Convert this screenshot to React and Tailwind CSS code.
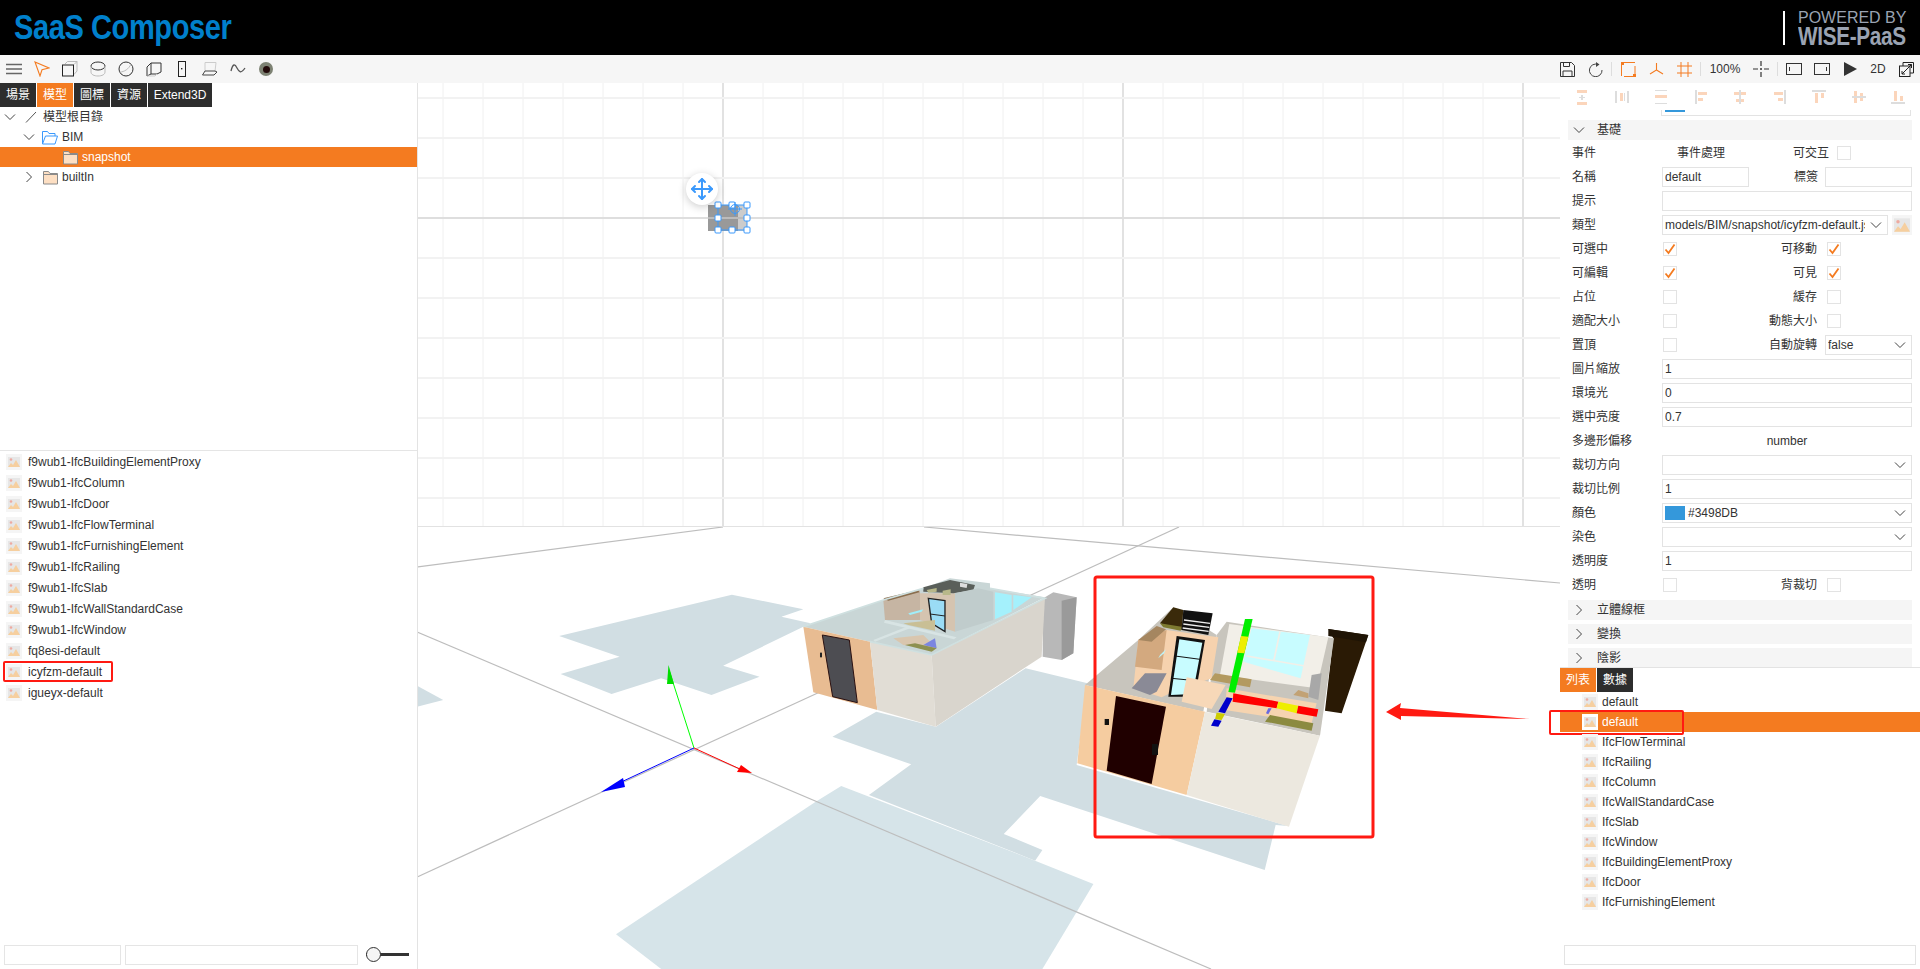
import { Move } from "lucide-react";

const ORANGE = "#f47b20";

function Chevron({ open, className = "" }) {
  return (
    <svg width="12" height="12" viewBox="0 0 12 12" className={className}>
      <polyline
        points={open ? "1,3.5 6,8.5 11,3.5" : "3.5,1 8.5,6 3.5,11"}
        fill="none"
        stroke="#444"
        strokeWidth="1"
      />
    </svg>
  );
}

function Folder({ open }) {
  if (open) {
    return (
      <svg width="16" height="15" viewBox="0 0 16 15">
        <path d="M.5 14V1.500h5l1.500 2h6v2.500" fill="#fff" stroke="#3b99fc" />
        <path d="M.5 14l3-8h12l-2.500 8z" fill="#fff" stroke="#3b99fc" />
      </svg>
    );
  }
  return (
    <svg width="15" height="15" viewBox="0 0 15 15">
      <path d="M.5 14V1.500h5l1.500 2h7.500V14z" fill="#fddfc3" stroke="#8a8a8a" />
      <path d="M.5 4.500h14" stroke="#8a8a8a" />
    </svg>
  );
}

function Pic({ bg = "#f5f5f5", size = 16 }) {
  return (
    <span className="flex shrink-0 items-center justify-center" style={{ background: bg, width: size, height: size }}>
      <svg width={size - 4} height={size - 6} viewBox="0 0 12 10">
        <rect width="12" height="10" fill="#e6e6e6" />
        <circle cx="3" cy="2.500" r="1.300" fill="#eeaaa0" />
        <path d="M0 10l3-4 2 2 3-5 4 7z" fill="#f6cf9f" />
      </svg>
    </span>
  );
}

const tool = "flex h-7 items-center justify-center";

function LeftTools() {
  return (
    <div className="flex items-center">
      <span className={`${tool} w-[28px]`}>
        <svg width="16" height="12" viewBox="0 0 16 12"><path d="M0 1.500h16M0 6h16M0 10.500h16" stroke="#666" strokeWidth="1.400" /></svg>
      </span>
      <span className={`${tool} w-[27px]`}>
        <svg width="16" height="16" viewBox="0 0 16 16"><path d="M1 1l14 6-7 1.800L6 15z" fill="none" stroke={ORANGE} strokeWidth="1.100" /></svg>
      </span>
      <span className={`${tool} w-[29px]`}>
        <svg width="16" height="16" viewBox="0 0 16 16"><path d="M3 3l2.500-2.500H15V10l-3 3.500" fill="none" stroke="#bbb" /><path d="M12 3.500L15 .5" stroke="#bbb" /><rect x=".5" y="4" width="11" height="11" fill="none" stroke="#222" /></svg>
      </span>
      <span className={`${tool} w-[28px]`}>
        <svg width="16" height="16" viewBox="0 0 16 16"><ellipse cx="8" cy="5" rx="7" ry="4" fill="none" stroke="#333" /><path d="M1 5v6c0 2.500 3 4 7 4s7-1.500 7-4V5" fill="none" stroke="#bbb" /></svg>
      </span>
      <span className={`${tool} w-[28px]`}>
        <svg width="16" height="16" viewBox="0 0 16 16"><circle cx="8" cy="8" r="7" fill="none" stroke="#333" /><path d="M2 11c4 0 9-3 11-8" fill="none" stroke="#bbb" /></svg>
      </span>
      <span className={`${tool} w-[28px]`}>
        <svg width="16" height="16" viewBox="0 0 16 16"><path d="M1 6l4-4h10v9l-4 2H5" fill="none" stroke="#333" /><path d="M1 6v9l4-2V2" fill="none" stroke="#333" /><path d="M1 15h8l2-2" fill="none" stroke="#ccc" /></svg>
      </span>
      <span className={`${tool} w-[28px]`}>
        <svg width="10" height="16" viewBox="0 0 10 16"><rect x="1.500" y=".5" width="7" height="15" fill="none" stroke="#222" /><rect x="4" y="7" width="1.400" height="1.400" fill="#222" /></svg>
      </span>
      <span className={`${tool} w-[28px]`}>
        <svg width="16" height="14" viewBox="0 0 16 14"><path d="M3 9V.5h11l-1 9" fill="none" stroke="#ccc" /><path d="M.5 13L3 9h10l2 1-3 3z" fill="none" stroke="#444" /></svg>
      </span>
      <span className={`${tool} w-[28px]`}>
        <svg width="16" height="10" viewBox="0 0 16 10"><path d="M1 7c2-8 4-7 6-3s4 6 8 0" fill="none" stroke="#555" strokeWidth="1.300" /></svg>
      </span>
      <span className={`${tool} w-[28px]`}>
        <span className="flex h-[14px] w-[14px] items-center justify-center rounded-full bg-[#7d8273]">
          <span className="h-[7px] w-[7px] rounded-full bg-[#220a0a]" />
        </span>
      </span>
    </div>
  );
}

function Sep() {
  return <span className="mx-[2px] h-[14px] w-px bg-[#ddd]" />;
}

function RightTools() {
  return (
    <div className="ml-auto flex items-center">
      <span className={`${tool} w-[28px]`}>
        <svg width="15" height="15" viewBox="0 0 15 15"><path d="M.5.5h11l3 3v11H.5z" fill="none" stroke="#333" /><path d="M3.500.5v4h6v-4M3 14.500V9h9v5.500" fill="none" stroke="#333" /></svg>
      </span>
      <span className={`${tool} w-[28px]`}>
        <svg width="15" height="15" viewBox="0 0 15 15"><path d="M10 2.500A6.300 6.300 0 1 0 14 8" fill="none" stroke="#444" /><path d="M8 0l3.500 2.500L8 5z" fill="#444" /></svg>
      </span>
      <Sep />
      <span className={`${tool} w-[28px]`}>
        <svg width="15" height="15" viewBox="0 0 15 15"><path d="M.5 14V.5H14M14 4v10.500H3" fill="none" stroke={ORANGE} /><rect x="0" y="0" width="3" height="3" fill={ORANGE} /><rect x="12" y="12" width="3" height="3" fill={ORANGE} /></svg>
      </span>
      <span className={`${tool} w-[28px]`}>
        <svg width="15" height="15" viewBox="0 0 15 15"><path d="M7.500 1v7L1 12M7.500 8l6.500 4" fill="none" stroke={ORANGE} strokeWidth="1.100" /></svg>
      </span>
      <span className={`${tool} w-[28px]`}>
        <svg width="15" height="15" viewBox="0 0 15 15"><path d="M4 0v15M11 0v15M0 4h15M0 11h15" stroke={ORANGE} /></svg>
      </span>
      <Sep />
      <span className={`${tool} w-[44px] text-xs text-[#333]`}>100%</span>
      <span className={`${tool} w-[28px]`}>
        <svg width="16" height="16" viewBox="0 0 16 16"><path d="M8 0v5M8 11v5M0 8h5M11 8h5" stroke="#333" strokeWidth="1.200" /><circle cx="8" cy="8" r="1" fill="#333" /></svg>
      </span>
      <Sep />
      <span className={`${tool} w-[28px]`}>
        <svg width="16" height="12" viewBox="0 0 16 12"><rect x=".5" y=".5" width="15" height="11" fill="none" stroke="#333" /><path d="M3.500 4v4" stroke="#333" /></svg>
      </span>
      <span className={`${tool} w-[28px]`}>
        <svg width="16" height="12" viewBox="0 0 16 12"><rect x=".5" y=".5" width="15" height="11" fill="none" stroke="#333" /><path d="M12.500 4v4" stroke="#333" /></svg>
      </span>
      <span className={`${tool} w-[28px]`}>
        <svg width="14" height="14" viewBox="0 0 14 14"><path d="M1 0l13 7-13 7z" fill="#333" /></svg>
      </span>
      <span className={`${tool} w-[28px] text-xs text-[#333]`}>2D</span>
      <span className={`${tool} w-[28px]`}>
        <svg width="15" height="15" viewBox="0 0 15 15"><path d="M4 4V.5h10.500V11H11" fill="none" stroke="#222" /><rect x=".5" y="4" width="10.500" height="10.500" fill="none" stroke="#222" /><path d="M3 12L12.500 2.500M9 2.500h3.500V6M3 9v3h3" fill="none" stroke="#222" /></svg>
      </span>
    </div>
  );
}

const Tab = ({ active, children, w }) => (
  <span
    className={`flex h-6 items-center justify-center text-xs ${active ? "bg-[#f47b20]" : "bg-[#2d2d2d]"} text-white`}
    style={{ width: w }}
  >
    {children}
  </span>
);

function TreeRow({ indent, chevron, icon, label, active }) {
  return (
    <div className={`flex h-5 items-center text-xs ${active ? "bg-[#f47b20] text-white" : "text-[#333]"}`}>
      <span className="flex w-4 shrink-0 justify-center" style={{ marginLeft: indent }}>
        {chevron && <Chevron open={chevron === "open"} />}
      </span>
      <span className="ml-[5px] mr-[4px] flex w-[16px] justify-center">{icon}</span>
      {label}
    </div>
  );
}

const MODELS = [
  "f9wub1-IfcBuildingElementProxy",
  "f9wub1-IfcColumn",
  "f9wub1-IfcDoor",
  "f9wub1-IfcFlowTerminal",
  "f9wub1-IfcFurnishingElement",
  "f9wub1-IfcRailing",
  "f9wub1-IfcSlab",
  "f9wub1-IfcWallStandardCase",
  "f9wub1-IfcWindow",
  "fq8esi-default",
  "icyfzm-default",
  "igueyx-default",
];

function LeftPanel() {
  return (
    <div className="flex w-[418px] shrink-0 flex-col border-r border-[#e3e3e3]">
      <div className="flex h-6 gap-px">
        <Tab w={36}>場景</Tab>
        <Tab w={36} active>模型</Tab>
        <Tab w={36}>圖標</Tab>
        <Tab w={36}>資源</Tab>
        <Tab w={64}>Extend3D</Tab>
      </div>
      <div className="h-[344px] border-b border-[#e5e5e5]">
        <TreeRow indent={2} chevron="open" label="模型根目錄" icon={<svg width="12" height="12" viewBox="0 0 12 12"><path d="M1 11.500L11 1" stroke="#555" /></svg>} />
        <TreeRow indent={21} chevron="open" label="BIM" icon={<Folder open />} />
        <TreeRow indent={41} active label="snapshot" icon={<Folder />} />
        <TreeRow indent={21} chevron="closed" label="builtIn" icon={<Folder />} />
      </div>
      <div className="flex-1 pl-[6px]">
        {MODELS.map((m) => (
          <div key={m} className="relative flex h-[21px] items-center gap-[6px] text-xs text-[#333]">
            <Pic />
            {m}
            {m === "icyfzm-default" && (
              <span className="absolute left-[-3px] top-0 h-[21px] w-[110px] rounded-[2px] border-2 border-[#ff1a12]" />
            )}
          </div>
        ))}
      </div>
      <div className="flex h-[24px] items-center gap-[4px] pb-[5px] pl-[4px]">
        <input className="h-5 w-[117px] border border-[#e5e5e5]" />
        <input className="h-5 w-[233px] border border-[#e5e5e5]" />
        <span className="relative ml-[4px] flex w-[43px] items-center">
          <span className="h-[3px] w-full bg-[#333]" />
          <span className="absolute left-0 h-[15px] w-[15px] rounded-full border border-[#333] bg-[#f5f5f5]" />
        </span>
      </div>
    </div>
  );
}

function Canvas2D() {
  const xs = [];
  for (let x = 443; x < 1560; x += 40) xs.push(x);
  const ys = [];
  for (let y = 98; y < 526; y += 40) ys.push(y);
  return (
    <div className="relative h-[444px] shrink-0 border-b border-[#e2e2e2]">
      <svg width="1142" height="443" viewBox="418 83 1142 443" className="block">
        {xs.map((x) => (
          <line key={x} x1={x} x2={x} y1="83" y2="526" stroke={(x - 723) % 400 === 0 ? "#d8d8d8" : "#f0f0f0"} strokeWidth={(x - 723) % 400 === 0 ? 1.500 : 1} />
        ))}
        {ys.map((y) => (
          <line key={y} x1="418" x2="1560" y1={y} y2={y} stroke={y === 218 ? "#dedede" : "#f2f2f2"} strokeWidth="2" />
        ))}
        <rect x="708" y="205" width="30" height="26" fill="#999" />
        <rect x="738" y="205" width="9" height="26" fill="#ccc" />
        <rect x="708" y="217" width="39" height="2" fill="#bbb" />
        <rect x="718" y="205" width="29" height="25" fill="none" stroke="#3b99fc" />
        {[[718, 205], [732, 205], [747, 205], [718, 218], [747, 218], [718, 230], [732, 230], [747, 230]].map(([x, y]) => (
          <rect key={`${x}-${y}`} x={x - 3} y={y - 3} width="6" height="6" rx="1" fill="#fff" stroke="#3b99fc" />
        ))}
        <circle cx="735" cy="209" r="4.500" fill="none" stroke="#3b99fc" />
        <path d="M735 202v14M728 209h14" stroke="#3b99fc" />
      </svg>
      <span className="absolute left-[268px] top-[90px] flex h-8 w-8 items-center justify-center rounded-full bg-white shadow-[0_2px_8px_rgba(0,0,0,0.2)]">
        <Move size={24} color="#3b99fc" strokeWidth={2} />
      </span>
    </div>
  );
}

function Building1() {
  return (
    <g transform="translate(760 560) scale(.3333)">
      <path d="M850 115L880 97 950 112 940 280 905 300 848 290z" fill="#b8b8b8" />
      <path d="M905 122L950 112 940 280 905 300z" fill="#9a9a9a" />
      <path d="M130 200L370 120 490 85 570 55 690 70 690 85 855 112 515 285 330 245z" fill="#c9d6d6" />
      <path d="M370 120L480 90 480 180 375 180z" fill="#c6b5a3" />
      <path d="M480 100L585 100 585 215 480 180z" fill="#d5c4b0" />
      <path d="M490 82L570 60 645 75 640 90 580 100 490 95z" fill="#5a5f5a" />
      <path d="M500 90L530 84 530 95 505 98zM548 92L572 88 572 105 548 105z" fill="#b8b88a" />
      <path d="M600 68L622 72 620 84 600 80z" fill="#ddd" />
      <path d="M585 100L655 85 700 95 700 180 585 215z" fill="#c0cccc" />
      <path d="M505 115L555 122 555 215 515 190z" fill="#9adcf5" stroke="#222" strokeWidth="4" />
      <path d="M510 162L555 168" stroke="#222" strokeWidth="3" />
      <path d="M705 97L755 105 755 155 705 178z" fill="#a4f1fc" />
      <path d="M760 105L815 112 760 150z" fill="#a4f1fc" />
      <path d="M370 115L475 90 478 97 385 122z" fill="#8a6e4e" />
      <path d="M445 160L490 148 485 155 450 165z" fill="#a0eefa" />
      <path d="M430 190L525 180 525 212 445 195z" fill="#c9bf95" />
      <path d="M375 180L590 232 582 238 372 188z" fill="#d8e4e4" />
      <path d="M340 240L440 200 450 205 345 245z" fill="#d8e4e4" />
      <path d="M400 235L490 225 530 265 430 255z" fill="#d9c6ae" />
      <path d="M525 235L490 255 530 265z" fill="#7b86e0" />
      <path d="M435 255L465 250 530 265 515 275z" fill="#8d9050" />
      <path d="M130 200L330 245 352 450 160 397z" fill="#e8bc92" />
      <path d="M187 225L268 240 292 428 218 410z" fill="#4d4d52" stroke="#2a1010" strokeWidth="3" />
      <rect x="180" y="278" width="6" height="14" fill="#222" />
      <path d="M330 245L515 285 527 500 352 450z" fill="#e1ddd5" />
      <path d="M515 285L855 115 845 290 527 500z" fill="#d9d5cd" />
      <path d="M130 200L370 120 490 85M330 245L515 285 855 115 690 85" fill="none" stroke="#cfe0e0" strokeWidth="5" />
    </g>
  );
}

function Building2() {
  return (
    <g transform="translate(1060 560) scale(.3333)">
      <path d="M805 207L925 225 845 460 795 452 820 235z" fill="#2a1a05" />
      <path d="M805 207L925 225 918 247 805 228z" fill="#1f1405" />
      <path d="M75 375L235 240 340 142 470 225 430 455z" fill="#c8c5bd" />
      <path d="M470 225L500 185 822 235 780 527 440 455z" fill="#c8c5bd" />
      <path d="M508 192L805 232 770 385 480 345z" fill="#f2efe8" />
      <path d="M575 205L750 225 722 355 550 305z" fill="#c8fcff" />
      <path d="M660 215L642 300M560 288L735 318" stroke="#f2efe8" strokeWidth="5" />
      <path d="M755 345L785 340 775 420 745 410z" fill="#a8a8a8" />
      <path d="M450 360L465 340 575 358 570 382z" fill="#b39a60" />
      <path d="M700 405L715 390 745 400 745 415z" fill="#c2a274" />
      <path d="M500 385L770 430 755 490 495 450z" fill="#f6d4b0" />
      <path d="M340 142L370 150 365 210 300 190z" fill="#3a2a0a" />
      <path d="M300 190L365 200 362 212 310 202z" fill="#7d7a30" />
      <path d="M370 150L458 160 445 225 365 210z" fill="#111" />
      <path d="M372 180L450 190M370 192L448 202M368 204L446 214" stroke="#eee" strokeWidth="4" />
      <path d="M320 210L475 232 455 355 330 400 305 412 220 385 235 240z" fill="#f6d2ae" />
      <path d="M235 240L320 210 305 330 225 320z" fill="#d3a97f" />
      <path d="M235 240L290 198 318 208 275 245z" fill="#a58660" />
      <path d="M300 285L318 268 312 280 295 295z" fill="#bdf3f7" />
      <path d="M350 228L435 240 405 410 325 410z" fill="#111" />
      <path d="M358 238L427 248 398 402 333 405z" fill="#c8fcff" />
      <path d="M345 288L420 298M335 355L405 362" stroke="#111" strokeWidth="3" />
      <path d="M215 385L255 340 320 340 290 395 270 405z" fill="#8a8a96" />
      <path d="M380 352L497 375 455 447 365 425z" fill="#f7d8b8" />
      <path d="M625 445L635 445 625 463 618 460z" fill="#6a6ae0" />
      <path d="M630 465L760 490 755 512 615 485z" fill="#8b8a40" />
      <path d="M75 375L435 455 380 705 52 610z" fill="#f5cca0" />
      <path d="M168 408L318 440 275 672 140 632z" fill="#200000" />
      <rect x="134" y="477" width="13" height="18" fill="#111" />
      <rect x="276" y="552" width="18" height="33" fill="#111" />
      <path d="M435 455L780 527 687 800 380 705z" fill="#ece8df" />
      <path d="M520 400L655 425 650 445 518 425z" fill="#f00" />
      <path d="M655 425L715 437 710 460 650 445z" fill="#ee0" />
      <path d="M715 437L775 448 770 470 710 460z" fill="#f00" />
      <path d="M555 177L578 177 525 398 505 396z" fill="#0e0" />
      <path d="M543 228L565 230 553 280 532 278z" fill="#ee0" />
      <path d="M500 412L518 415 495 460 475 455z" fill="#00c" />
      <path d="M470 458L495 462 485 480 465 478z" fill="#cc0" />
      <path d="M463 478L485 482 475 500 453 497z" fill="#00c" />
    </g>
  );
}

function Scene() {
  return (
    <svg width="1142" height="442" viewBox="418 527 1142 442" className="block">
      <g transform="translate(417 520) scale(.7289 .3333)">
        <g fill="#d1dee3">
          <path d="M195 348L432 224 530 268 500 290 540 310 420 437 470 470 404 525 335 475 267 522 197 462 278 410z" />
          <path d="M0 497L36 540 0 560z" />
          <path d="M570 650L630 575 712 620 835 445 920 490 905 735 1195 918 1178 915 1163 1050 855 828 805 942 858 990 848 1022 620 825 678 733z" />
          <path fill="#d6e4e9" d="M582 798L848 1022 928 1092 858 1347 335 1347 273 1243 547 845z" />
        </g>
      </g>
      <g stroke="#bdbdbd" strokeWidth="1.200">
        <line x1="417" y1="567" x2="723" y2="527" />
        <line x1="924" y1="527" x2="1560" y2="583" />
        <line x1="1179" y1="527" x2="417" y2="877" />
        <line x1="417" y1="632" x2="1211" y2="969" />
      </g>
      <Building1 />
      <Building2 />
      <g transform="translate(417 520)">
        <line x1="277" y1="228" x2="252" y2="150" stroke="#0f0" />
        <path d="M251.500 145L257 164 250 164z" fill="#0d0" />
        <line x1="277" y1="228" x2="200" y2="264" stroke="#00f" />
        <path d="M184 272L206 258 208 267z" fill="#00f" />
        <line x1="277" y1="228" x2="325" y2="250" stroke="#f00" />
        <path d="M335 253L320 252 324 245z" fill="#f00" />
      </g>
      <rect x="1095" y="577" width="278" height="260" rx="2" fill="none" stroke="#ff1a12" strokeWidth="3" />
      <path d="M1386 712L1401 703 1400 708 1530 719 1401 716 1401 720z" fill="#ff1a12" />
    </svg>
  );
}

function Cb({ on }) {
  return (
    <span className="flex h-[14px] w-[14px] shrink-0 items-center justify-center border border-[#e3e3e3] bg-white">
      {on && (
        <svg width="12" height="12" viewBox="0 0 12 12"><path d="M1.500 6.500L4.500 10 10.500 1.500" fill="none" stroke={ORANGE} strokeWidth="1.800" /></svg>
      )}
    </span>
  );
}

const Row = ({ label, children }) => (
  <div className="flex h-6 items-center text-xs text-[#333]">
    <span className="w-[94px] shrink-0 pl-1">{label}</span>
    {children}
  </div>
);

const Txt = ({ value = "", className = "w-[250px]" }) => (
  <input readOnly value={value} className={`h-5 border border-[#e3e3e3] px-[2px] text-xs text-[#333] outline-none ${className}`} />
);

const Sel = ({ children, className = "w-[250px]" }) => (
  <span className={`flex h-5 items-center border border-[#e3e3e3] pl-[2px] text-xs text-[#333] ${className}`}>
    <span className="min-w-0 flex-1 overflow-hidden whitespace-nowrap">{children}</span>
    <Chevron open className="mx-[5px] shrink-0" />
  </span>
);

const CheckRow = ({ label, on, right, rightOn }) => (
  <Row label={label}>
    <span className="ml-px"><Cb on={on} /></span>
    <span className="w-[140px] text-right">{right}</span>
    <span className="ml-[10px]"><Cb on={rightOn} /></span>
  </Row>
);

const Section = ({ label }) => (
  <div className="mb-1 flex h-5 items-center bg-[#f5f5f5] text-xs text-[#333]">
    <span className="ml-[5px] mr-[12px] flex"><Chevron /></span>
    {label}
  </div>
);

// pale = orange bar, grey = rule
const ALIGN = [
  [["#fbd5bb", 3, 1, 10, 3], ["#fbd5bb", 3, 13, 10, 3], ["#ddd", 5, 8, 6, 1], ["#ddd", 7, 6, 2, 5]],
  [["#ddd", 1, 2, 2, 12], ["#ddd", 13, 2, 2, 12], ["#fbd5bb", 6, 4, 3, 8], ["#ddd", 10, 4, 1, 8]],
  [["#ddd", 2, 1, 12, 1], ["#ddd", 2, 14, 12, 1], ["#fbd5bb", 2, 6, 12, 3]],
  [["#ddd", 2, 1, 2, 14], ["#fbd5bb", 5, 3, 9, 3], ["#fbd5bb", 5, 9, 5, 3]],
  [["#fbd5bb", 2, 3, 12, 3], ["#fbd5bb", 4, 10, 8, 3], ["#ddd", 7, 1, 2, 14]],
  [["#ddd", 12, 1, 2, 14], ["#fbd5bb", 2, 3, 9, 3], ["#fbd5bb", 6, 9, 5, 3]],
  [["#ddd", 1, 1, 14, 2], ["#fbd5bb", 4, 4, 3, 10], ["#fbd5bb", 10, 4, 3, 5]],
  [["#fbd5bb", 3, 2, 3, 12], ["#fbd5bb", 9, 4, 3, 8], ["#ddd", 1, 7, 14, 2]],
  [["#ddd", 1, 13, 14, 2], ["#fbd5bb", 4, 2, 3, 10], ["#fbd5bb", 10, 7, 3, 5]],
];

const LIST = ["default", "default", "IfcFlowTerminal", "IfcRailing", "IfcColumn", "IfcWallStandardCase", "IfcSlab", "IfcWindow", "IfcBuildingElementProxy", "IfcDoor", "IfcFurnishingElement"];

function RightPanel() {
  return (
    <div className="flex w-[360px] shrink-0 flex-col">
      <div className="h-[585px] shrink-0 overflow-hidden border-b border-[#e3e3e3] pl-[8px]">
        <div className="flex h-[27px] items-center pl-[6px]">
          {ALIGN.map((icon, i) => (
            <span key={i} className="flex w-[39.500px] shrink-0 justify-start">
              <svg width="16" height="16" viewBox="0 0 16 16">
                {icon.map(([c, x, y, w, h], j) => <rect key={j} x={x} y={y} width={w} height={h} fill={c} />)}
              </svg>
            </span>
          ))}
        </div>
        <div className="ml-[93px] h-[6px] w-[250px] border-x border-b border-[#e3e3e3] pl-[3px]">
          <div className="h-[2px] w-5 bg-[#3498db]" />
        </div>
        <div className="mt-1 w-[344px]">
          <div className="flex h-5 items-center bg-[#f5f5f5] text-xs text-[#333]">
            <span className="ml-[5px] mr-[12px] flex"><Chevron open /></span>
            基礎
          </div>
          <div className="h-px" />
          <Row label="事件">
            <span className="ml-[15px] w-[116px]">事件處理</span>
            <span className="w-[44px]">可交互</span>
            <Cb />
          </Row>
          <Row label="名稱">
            <Txt value="default" className="w-[87px]" />
            <span className="ml-[45px] w-[31px]">標簽</span>
            <Txt className="w-[87px]" />
          </Row>
          <Row label="提示"><Txt /></Row>
          <Row label="類型">
            <Sel className="w-[226px]">models/BIM/snapshot/icyfzm-default.json</Sel>
            <span className="ml-[4px] flex h-5 w-5 items-center justify-center bg-[#f5f5f5]"><Pic size={20} /></span>
          </Row>
          <CheckRow label="可選中" on right="可移動" rightOn />
          <CheckRow label="可編輯" on right="可見" rightOn />
          <CheckRow label="占位" right="緩存" />
          <CheckRow label="適配大小" right="動態大小" />
          <Row label="置頂">
            <span className="ml-px"><Cb /></span>
            <span className="w-[140px] text-right">自動旋轉</span>
            <Sel className="ml-[8px] w-[87px]">false</Sel>
          </Row>
          <Row label="圖片縮放"><Txt value="1" /></Row>
          <Row label="環境光"><Txt value="0" /></Row>
          <Row label="選中亮度"><Txt value="0.7" /></Row>
          <Row label="多邊形偏移"><span className="w-[250px] text-center">number</span></Row>
          <Row label="裁切方向"><Sel /></Row>
          <Row label="裁切比例"><Txt value="1" /></Row>
          <Row label="顏色">
            <Sel>
              <span className="flex items-center gap-[3px]">
                <span className="h-[14px] w-5 bg-[#3498db]" />#3498DB
              </span>
            </Sel>
          </Row>
          <Row label="染色"><Sel /></Row>
          <Row label="透明度"><Txt value="1" /></Row>
          <CheckRow label="透明" right="背裁切" />
          <div className="h-[3px]" />
          <Section label="立體線框" />
          <Section label="變換" />
          <Section label="陰影" />
        </div>
      </div>
      <div className="flex h-6 gap-px">
        <Tab w={36} active>列表</Tab>
        <Tab w={36}>數據</Tab>
      </div>
      <div className="flex-1">
        {LIST.map((m, i) => (
          <div key={i} className={`relative flex h-5 items-center gap-[4px] pl-[22px] text-xs ${i === 1 ? "bg-[#f47b20] text-white" : "text-[#333]"}`}>
            <Pic bg={i === 1 ? "#fff" : "#f5f5f5"} />
            {m}
            {i === 1 && (
              <span className="absolute left-[-11px] top-[-2px] h-[25px] w-[135px] rounded-[2px] border-2 border-[#ff1a12]" />
            )}
          </div>
        ))}
      </div>
      <div className="flex h-[24px] items-start pl-[4px]">
        <input className="h-5 w-[352px] border border-[#e3e3e3]" />
      </div>
    </div>
  );
}

export default function App() {
  return (
    <div className="flex h-[969px] w-[1920px] flex-col overflow-hidden bg-white [font-family:'Liberation_Sans','Noto_Sans_CJK_TC',sans-serif]">
      <div className="flex h-[55px] shrink-0 items-center bg-black pl-[14px] pr-[14px]">
        <span className="origin-left scale-x-[.83] text-[35px] font-bold tracking-[-0.5px] text-[#0080cc]">SaaS Composer</span>
        <div className="ml-auto flex items-center">
          <span className="mr-[13px] h-[34px] w-[2px] bg-white" />
          <div className="flex w-[108px] flex-col text-[#9aa3b2]">
            <span className="whitespace-nowrap text-[16px] leading-[16px]">POWERED BY</span>
            <span className="origin-left scale-x-[.83] whitespace-nowrap text-[25px] font-bold leading-[20px] tracking-[-0.4px]">WISE-PaaS</span>
          </div>
        </div>
      </div>
      <div className="flex h-7 shrink-0 items-center bg-[#f6f6f6]">
        <LeftTools />
        <RightTools />
      </div>
      <div className="flex min-h-0 flex-1">
        <LeftPanel />
        <div className="flex w-[1142px] shrink-0 flex-col overflow-hidden">
          <Canvas2D />
          <Scene />
        </div>
        <RightPanel />
      </div>
    </div>
  );
}
